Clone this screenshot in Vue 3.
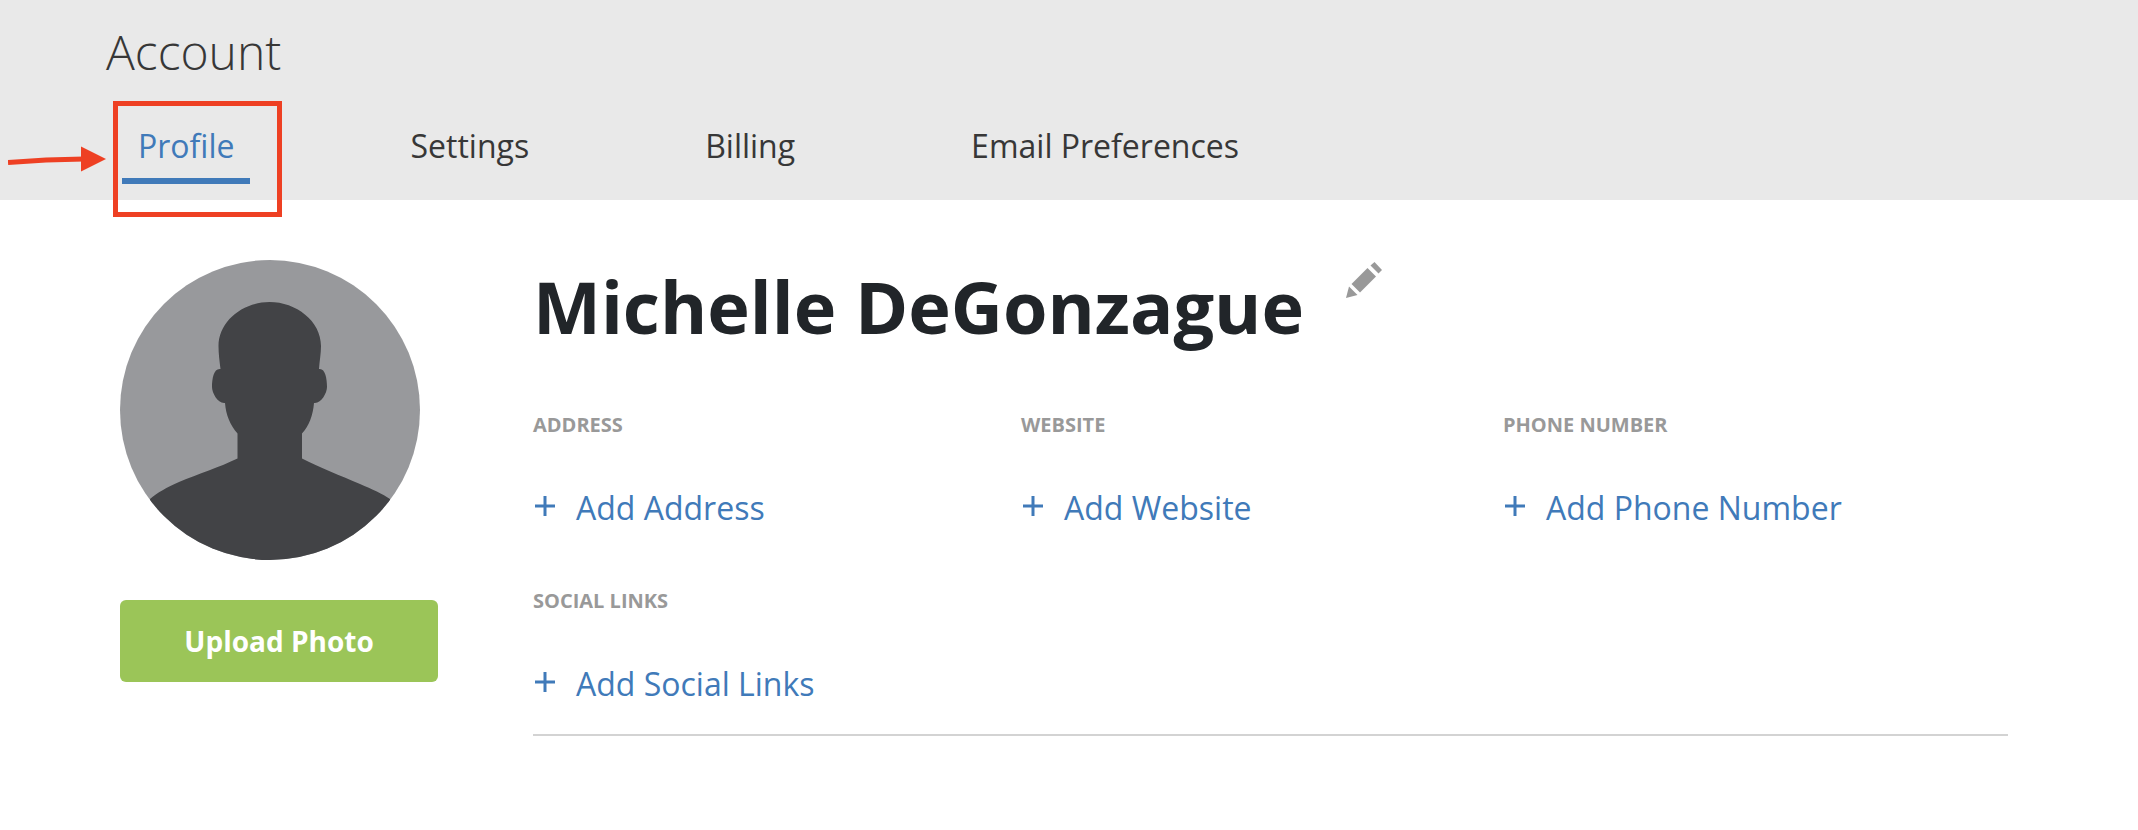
<script setup>
import { ref } from 'vue'

const tabs = ['Profile', 'Settings', 'Billing', 'Email Preferences']
const active = ref('Profile')

const fields = [
  { label: 'Address', action: 'Add Address' },
  { label: 'Website', action: 'Add Website' },
  { label: 'Phone Number', action: 'Add Phone Number' },
  { label: 'Social Links', action: 'Add Social Links' },
]
</script>

<template>
  <div class="page">
    <header class="header">
      <h1 class="title">Account</h1>
      <nav class="tabs">
        <a
          v-for="tab in tabs"
          :key="tab"
          href="#"
          class="tab"
          :class="{ active: tab === active }"
          @click.prevent="active = tab"
          >{{ tab }}</a
        >
      </nav>
      <div class="callout"></div>
      <svg class="arrow" viewBox="0 0 100 28" aria-hidden="true">
        <path d="M0 16.500 Q38 13.500 76 13" fill="none" stroke="#ee4023" stroke-width="5" />
        <path d="M73 0.500 L98 13 L73 25.500 Z" fill="#ee4023" />
      </svg>
    </header>

    <main class="profile">
      <aside class="photo">
        <svg class="avatar" viewBox="0 0 300 300" role="img" aria-label="Profile photo">
          <defs>
            <clipPath id="avatar-clip"><circle cx="150" cy="150" r="150" /></clipPath>
          </defs>
          <g clip-path="url(#avatar-clip)">
            <rect width="300" height="300" fill="#98999c" />
            <path
              fill="#424346"
              d="M149.500 42 C176 42 201 61 201 86 C201 94 199.500 101 199 109 C205 108 207 118 207 127 C207 133 201 144 194 143 C193 155 189 166 182 173.500 V198.500 C199 207 221 216 240 224 C252 229 263 234 270 239 V300 H30 V239 C37 233 47 227 59 222 C78 214 100 207 117.500 198.500 V173.500 C110 165 106 155 105 143 C98 144 92 133 92 127 C92 118 94 108 100.500 109 C99.500 101 98.500 94 98.500 86 C98.500 61 123 42 149.500 42 Z"
            />
          </g>
        </svg>
        <button type="button" class="upload">Upload Photo</button>
      </aside>

      <section class="details">
        <div class="name-row">
          <h2 class="name">Michelle DeGonzague</h2>
          <button type="button" class="edit" aria-label="Edit name">
            <svg viewBox="0 0 36 36" fill="#999">
              <path d="M28.500 0 L36 8 L32.500 11.500 L24.500 3.500 Z" />
              <path d="M21.500 6 L30 14.500 L14 30.500 L5.500 22 Z" />
              <path d="M3 24.500 L11.500 33 L0 36 Z" />
            </svg>
          </button>
        </div>
        <div class="fields">
          <div v-for="field in fields" :key="field.label" class="field">
            <h3 class="label">{{ field.label }}</h3>
            <a href="#" class="add" @click.prevent>
              <svg class="plus" viewBox="0 0 20 20" aria-hidden="true">
                <path d="M0 10 H20 M10 0 V20" stroke="currentColor" stroke-width="3" />
              </svg>
              <span>{{ field.action }}</span>
            </a>
          </div>
        </div>
      </section>
    </main>
  </div>
</template>

<style>
body {
  margin: 0;
  background: #fff;
}
</style>

<style scoped>
.page {
  font-family: 'Open Sans', 'Noto Sans', sans-serif;
  color: #373737;
}
.header {
  position: relative;
  padding: 20px 106px 16px;
  background: #e9e9e9;
}
.title {
  margin: 0 0 38px;
  font-size: 48px;
  font-weight: 300;
  line-height: 64px;
}
.tabs {
  display: flex;
  gap: 144px;
  padding-left: 16px;
}
.tab {
  padding: 0 16px 8px;
  border-bottom: 6px solid transparent;
  color: #373737;
  font-size: 32px;
  line-height: 48px;
  text-decoration: none;
  white-space: nowrap;
}
.tab.active {
  border-bottom-color: #407ab9;
  color: #407ab9;
}
.callout {
  position: absolute;
  top: 101px;
  left: 113px;
  box-sizing: border-box;
  width: 169px;
  height: 116px;
  border: 5px solid #ee4023;
  pointer-events: none;
}
.arrow {
  position: absolute;
  top: 146px;
  left: 8px;
  width: 100px;
  height: 28px;
}
.profile {
  display: flex;
  align-items: flex-start;
  gap: 95px;
  padding: 60px 130px 60px 120px;
}
.photo {
  display: flex;
  flex: none;
  flex-direction: column;
  gap: 40px;
  width: 318px;
}
.avatar {
  width: 300px;
  height: 300px;
}
.upload {
  height: 82px;
  border: 0;
  border-radius: 6px;
  background: #9bc558;
  color: #fff;
  font-family: inherit;
  font-size: 28px;
  font-weight: 700;
}
.details {
  flex: 1;
  min-width: 0;
  padding-bottom: 26px;
  border-bottom: 2px solid #d3d3d3;
}
.name-row {
  display: flex;
  align-items: flex-start;
  gap: 42px;
  margin-bottom: 58px;
}
.name {
  margin: 0;
  color: #212529;
  font-size: 72px;
  font-weight: 700;
  line-height: 92px;
}
.edit {
  margin-top: 2px;
  padding: 0;
  border: 0;
  background: none;
}
.edit svg {
  display: block;
  width: 36px;
  height: 36px;
}
.fields {
  display: grid;
  grid-template-columns: 488fr 482fr 505fr;
  row-gap: 54px;
}
.label {
  margin: 0 0 44px;
  color: #999;
  font-size: 20px;
  font-weight: 700;
  line-height: 30px;
  text-transform: uppercase;
}
.add {
  display: flex;
  align-items: flex-start;
  gap: 21px;
  padding-left: 2px;
  color: #407ab9;
  font-size: 32px;
  line-height: 48px;
  text-decoration: none;
}
.plus {
  width: 20px;
  height: 20px;
  margin-top: 12px;
}
</style>
